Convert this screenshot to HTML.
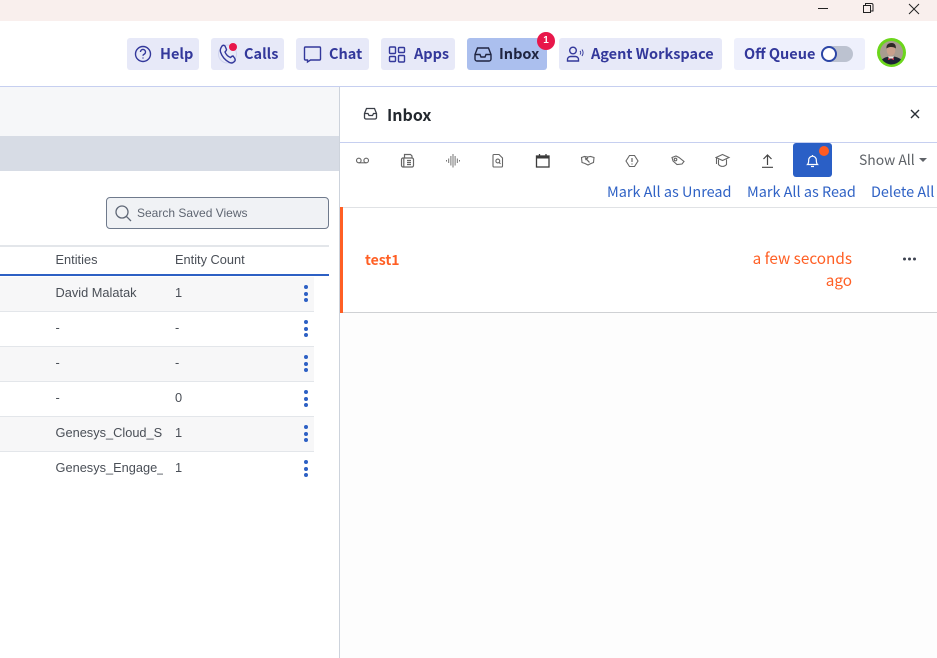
<!DOCTYPE html>
<html><head><meta charset="utf-8">
<style>
html,body{margin:0;padding:0;width:937px;height:658px;overflow:hidden;background:#fff}
*{box-sizing:border-box}
.a{position:absolute}
body{font-family:"Liberation Sans",sans-serif;position:relative}
.btn{position:absolute;top:38px;height:32px;border-radius:3px;background:#e7e9f8;color:#33389b;font:700 14.500px/32px "Noto Sans CJK JP","Liberation Sans",sans-serif;white-space:nowrap}
.btn span{position:absolute;top:0}
.btn svg{position:absolute;left:0;top:0;fill:none;stroke:#33389b;stroke-width:1.4}
.t{position:absolute;font:12.800px/16px "Liberation Sans",sans-serif;color:#4a4f57;white-space:nowrap;overflow:hidden}
.row{position:absolute;left:0;width:314px;height:35px;border-bottom:1px solid #e3e6ea}
.dots{position:absolute;left:304px;width:4px}
.dots i{display:block;width:4px;height:4px;border-radius:50%;background:#2d60c4;margin-bottom:2.5px}
.ic{position:absolute;top:150px;fill:none;stroke:#666;stroke-width:1.1}
.link{position:absolute;top:183px;font:14.450px/18px "Noto Sans CJK JP","Liberation Sans",sans-serif;color:#2f62c5;white-space:nowrap}
</style></head>
<body>
<div class="a" style="left:0;top:0;width:937px;height:21px;background:#f9efed"></div>
<svg class="a" style="left:810px;top:0" width="127" height="18" fill="none" stroke="#222" stroke-width="1">
<path d="M8 8.500h10"/>
<path d="M53.500 5.500h7v7h-7zM55.500 5.500v-2h6a1.500 1.500 0 0 1 1.500 1.500v6h-2.500"/>
<path d="M99 4l10 10M109 4l-10 10"/>
</svg>

<div class="a" style="left:0;top:86px;width:937px;height:1px;background:#c6cff0"></div>

<div class="btn" style="left:127px;width:72px"><svg width="32" height="32"><circle cx="16" cy="16" r="7.500"/><path d="M13.500 14a2.500 2.500 0 1 1 3.600 2.200c-.8.4-1.100.9-1.100 1.600"/><path d="M16 19.500v1"/></svg><span style="left:33px">Help</span></div>
<div class="btn" style="left:211px;width:73px"><svg width="32" height="32"><circle cx="16.500" cy="16" r="9" stroke="#cfd3ef" stroke-width="1"/><path d="M11 8c1-1 2-1 3 0l1.500 3.500c0 1-1 2-1.500 2.500 1 2.500 3 4.500 5.500 5.500.5-.5 1.500-1.500 2.500-1.500l1.500 2c1 1.500 1 2.500 0 3.500-1.500 1.500-3 2-5 1-4-2-7.500-6-9-10.500-.8-2.500.5-4.500 1.500-6z"/><circle cx="22" cy="9" r="4" fill="#e8174a" stroke="none"/></svg><span style="left:33px">Calls</span></div>
<div class="btn" style="left:296px;width:73px"><svg width="32" height="32"><path d="M9.500 9h14a1 1 0 0 1 1 1v11a1 1 0 0 1-1 1h-9l-3 2v-2h-2a1 1 0 0 1-1-1v-11a1 1 0 0 1 1-1z"/></svg><span style="left:33px">Chat</span></div>
<div class="btn" style="left:381px;width:74px"><svg width="32" height="32"><rect x="8.500" y="9" width="6" height="6.500" rx="1"/><rect x="17.500" y="9.500" width="6" height="5" rx="1"/><rect x="8.500" y="18.500" width="6" height="5" rx="1"/><rect x="17.500" y="17.500" width="6" height="6.500" rx="1"/></svg><span style="left:33px">Apps</span></div>
<div class="btn" style="left:467px;width:80px;background:#abbfee;color:#1f2440"><svg width="32" height="32" style="stroke:#1f2440"><path d="M10.500 10h11l2.500 6.500v4.500a2 2 0 0 1-2 2h-12a2 2 0 0 1-2-2v-4.500z"/><path d="M8 16.500h5l1 2.500h4l1-2.500h5"/></svg><span style="left:32px">Inbox</span></div>
<div class="a" style="left:537px;top:32px;width:18px;height:18px;border-radius:50%;background:#e8174a;color:#fff;font:700 10px/18px 'Liberation Sans',sans-serif;text-align:center">1</div>
<div class="btn" style="left:559px;width:163px"><svg width="32" height="32"><circle cx="14" cy="12.500" r="3.300"/><path d="M8.500 23v-1a3 3 0 0 1 3-3.500h5a3 3 0 0 1 3 3.500v1z"/><path d="M21 13a2.500 2.500 0 0 1 0 3.500M23 11.500a5.500 5.500 0 0 1 0 6.500" stroke-width="1"/></svg><span style="left:32px">Agent Workspace</span></div>
<div class="btn" style="left:734px;width:131px;background:#eef0fc"><span style="left:10px">Off Queue</span></div>
<div class="a" style="left:821px;top:46px;width:32px;height:16px;border-radius:8px;background:#bcc2d0"></div>
<div class="a" style="left:821px;top:46px;width:16px;height:16px;border-radius:50%;background:#fff;border:2.500px solid #2c46a6"></div>
<svg class="a" style="left:877px;top:38px" width="30" height="30">
<circle cx="14.500" cy="14.500" r="14.500" fill="#6cd61c"/>
<circle cx="14.500" cy="14.500" r="11.500" fill="#a89c90"/>
<path d="M5 21.500c3-2.500 6-3 9.500-3s6.500.5 9.500 3a11.500 11.500 0 0 1-19 0z" fill="#1c2434"/>
<ellipse cx="14" cy="12.500" rx="4.300" ry="5.300" fill="#c9a08c"/>
<path d="M9.500 10.500c-.5-4 2.500-5.500 5-5.500s4.800 1.500 4.300 5.500c-2-2-7.300-2-9.300 0z" fill="#2e2926"/>
<path d="M11 18.500h6l-1 2h-4z" fill="#e9e4e0"/>
<path d="M11 20l3 1 3-1v2l-3-1-3 1z" fill="#d8344a"/>
</svg>

<!-- left panel -->
<div class="a" style="left:0;top:87px;width:339px;height:49px;background:#f6f7f9"></div>
<div class="a" style="left:0;top:136px;width:339px;height:35px;background:#d7dce5"></div>
<div class="a" style="left:106px;top:197px;width:223px;height:32px;border:1px solid #6f7a8c;border-radius:4px;background:#f0f2f5"></div>
<svg class="a" style="left:113px;top:203px" width="20" height="20" fill="none" stroke="#5f6776" stroke-width="1.300"><circle cx="9" cy="9" r="6"/><path d="M13.500 13.500l4.500 4.500"/></svg>
<div class="t" style="left:137px;top:205px;font-size:12px;color:#5f6672">Search Saved Views</div>

<div class="a" style="left:0;top:245px;width:329px;height:2px;background:#e3e6ea"></div>
<div class="t" style="left:55.500px;top:252px">Entities</div>
<div class="t" style="left:175px;top:252px">Entity Count</div>
<div class="a" style="left:0;top:274px;width:329px;height:2px;background:#2d60c4"></div>

<div class="row" style="top:277px;background:#f7f7f8"></div>
<div class="row" style="top:312px;background:#fff"></div>
<div class="row" style="top:347px;background:#f7f7f8"></div>
<div class="row" style="top:382px;background:#fff"></div>
<div class="row" style="top:417px;background:#f7f7f8"></div>
<div class="row" style="top:452px;background:#fff;border-bottom:none"></div>

<div class="t" style="left:55.500px;top:285px">David Malatak</div><div class="t" style="left:175px;top:285px">1</div>
<div class="t" style="left:55.500px;top:320px">-</div><div class="t" style="left:175px;top:320px">-</div>
<div class="t" style="left:55.500px;top:355px">-</div><div class="t" style="left:175px;top:355px">-</div>
<div class="t" style="left:55.500px;top:390px">-</div><div class="t" style="left:175px;top:390px">0</div>
<div class="t" style="left:55.500px;top:425px;width:107.500px">Genesys_Cloud_Support</div><div class="t" style="left:175px;top:425px">1</div>
<div class="t" style="left:55.500px;top:460px;width:107.500px">Genesys_Engage_Support</div><div class="t" style="left:175px;top:460px">1</div>

<div class="dots" style="top:285px"><i></i><i></i><i></i></div>
<div class="dots" style="top:320px"><i></i><i></i><i></i></div>
<div class="dots" style="top:355px"><i></i><i></i><i></i></div>
<div class="dots" style="top:390px"><i></i><i></i><i></i></div>
<div class="dots" style="top:425px"><i></i><i></i><i></i></div>
<div class="dots" style="top:460px"><i></i><i></i><i></i></div>

<!-- right panel -->
<div class="a" style="left:339px;top:87px;width:1px;height:571px;background:#cdd3dc"></div>
<div class="a" style="left:340px;top:313px;width:597px;height:345px;background:#fdfdfd"></div>
<svg class="a" style="left:363px;top:106px;fill:none;stroke:#3a3f47;stroke-width:1.300" width="16" height="16"><path d="M3.500 2.500h8l2 5v4a1.500 1.500 0 0 1-1.500 1.500h-9a1.500 1.500 0 0 1-1.500-1.500v-4z"/><path d="M1.500 7.500h3.500l1 2h3.500l1-2h3"/></svg>
<div class="a" style="left:387px;top:101px;font:700 16px/26px 'Noto Sans CJK JP','Liberation Sans',sans-serif;color:#23282e">Inbox</div>
<svg class="a" style="left:909px;top:108px" width="12" height="12" stroke="#2a2f36" stroke-width="1.400"><path d="M2 2l8 8M10 2l-8 8"/></svg>
<div class="a" style="left:340px;top:142px;width:597px;height:1px;background:#c6cff0"></div>

<svg class="ic" style="left:355px" width="16" height="20"><circle cx="3.800" cy="10.500" r="2.300"/><circle cx="11.200" cy="10.500" r="2.300"/><path d="M3.800 12.800h7.400"/></svg>
<svg class="ic" style="left:400px;stroke-width:1.200" width="16" height="20"><rect x="1.500" y="8" width="12" height="9" rx="1.500"/><path d="M4.500 8V4.500h6l1.500 1.500v2M3.800 8v9M7 10.500h4M7 12.500h4M7 14.500h4"/></svg>
<svg class="ic" style="left:445px;stroke-width:.9" width="16" height="20"><path d="M1.500 10v1.500M3.700 8.500v4.500M5.900 6v9.500M8 4v13.500M10.100 6v9.500M12.300 8.500v4.500M14.500 10v1.500"/></svg>
<svg class="ic" style="left:490px" width="16" height="20"><path d="M4 4.500h5l3.500 3.500v8a1 1 0 0 1-1 1H4a1 1 0 0 1-1-1V5.500a1 1 0 0 1 1-1z"/><circle cx="7.800" cy="11" r="1.900"/><path d="M9.200 12.500l1.300 1.300"/></svg>
<svg class="ic" style="left:535px;stroke:#3b3b3b;stroke-width:1.300" width="16" height="20"><rect x="1.500" y="6" width="12.500" height="11"/><path d="M1.500 7.500h12.500" stroke-width="2"/><path d="M4.500 4v2.500M11 4v2.500"/></svg>
<svg class="ic" style="left:580px" width="16" height="20"><path d="M1.500 7.500l3-1 3 .5 3-.5 3.500 1-.5 5-2.500 1-3 1.500-3-1.500-3-1z"/><path d="M5 7.500l4.500 5M8 7.500L5.500 10" stroke-width="1.300"/></svg>
<svg class="ic" style="left:625px" width="16" height="20"><path d="M4.500 5.500h5l3.500 5.500-3.500 5.500h-5L1 11z"/><path d="M7 8v4M7 13.500v1" stroke-width="1.200"/></svg>
<svg class="ic" style="left:670px" width="16" height="20"><path d="M2 7.500l4-1.500 3 1.500 5 4-2 2.500-5 .5-4-3.500z"/><circle cx="5.500" cy="9.500" r="1.300"/></svg>
<svg class="ic" style="left:715px" width="16" height="20"><path d="M7.500 4.500L14 7.500l-6.500 3L1 7.500z"/><path d="M3.500 9.500v5c2 2.500 6 2.500 8 0v-5M1.500 8v6"/></svg>
<svg class="ic" style="left:760px;stroke:#444;stroke-width:1.200" width="16" height="20"><path d="M7.500 15V5M3.500 9L7.500 5l4 4M2 17.300h11"/></svg>

<div class="a" style="left:793px;top:143px;width:39px;height:34px;background:#2a5fc6;border-radius:3px"></div>
<svg class="a" style="left:805px;top:152px;fill:none;stroke:#fff;stroke-width:1.200" width="15" height="17"><path d="M2.500 12.500c1-1 1.200-2 1.200-4.500a3.800 3.800 0 0 1 7.600 0c0 2.500.2 3.500 1.200 4.500z"/><path d="M6 14.500h3"/><path d="M7.500 3v1"/></svg>
<div class="a" style="left:819px;top:146px;width:10px;height:10px;border-radius:50%;background:#ff5b24"></div>

<div class="a" style="left:859px;top:151px;font:13.900px/18px 'Noto Sans CJK JP','Liberation Sans',sans-serif;color:#5f6368;white-space:nowrap">Show All</div>
<div class="a" style="left:919px;top:158px;width:0;height:0;border-left:4px solid transparent;border-right:4px solid transparent;border-top:4px solid #5f6368"></div>

<div class="link" style="left:607px">Mark All as Unread</div>
<div class="link" style="left:747px">Mark All as Read</div>
<div class="link" style="left:871px">Delete All</div>

<div class="a" style="left:340px;top:207px;width:597px;height:1px;background:#e0e2e5"></div>
<div class="a" style="left:340px;top:312px;width:597px;height:1px;background:#cfd1d4"></div>
<div class="a" style="left:340px;top:207px;width:3px;height:106px;background:#ff5f24"></div>
<div class="a" style="left:365px;top:250px;font:700 14px/20px 'Noto Sans CJK JP','Liberation Sans',sans-serif;color:#ff5f24">test1</div>
<div class="a" style="left:732px;top:248px;width:120px;text-align:right;font:15.300px/21.500px 'Noto Sans CJK JP','Liberation Sans',sans-serif;color:#ff5f24">a few seconds<br>ago</div>
<svg class="a" style="left:902px;top:255px" width="16" height="8" fill="#3d4250"><circle cx="2.500" cy="4" r="1.500"/><circle cx="7.500" cy="4" r="1.500"/><circle cx="12.500" cy="4" r="1.500"/></svg>
</body></html>
